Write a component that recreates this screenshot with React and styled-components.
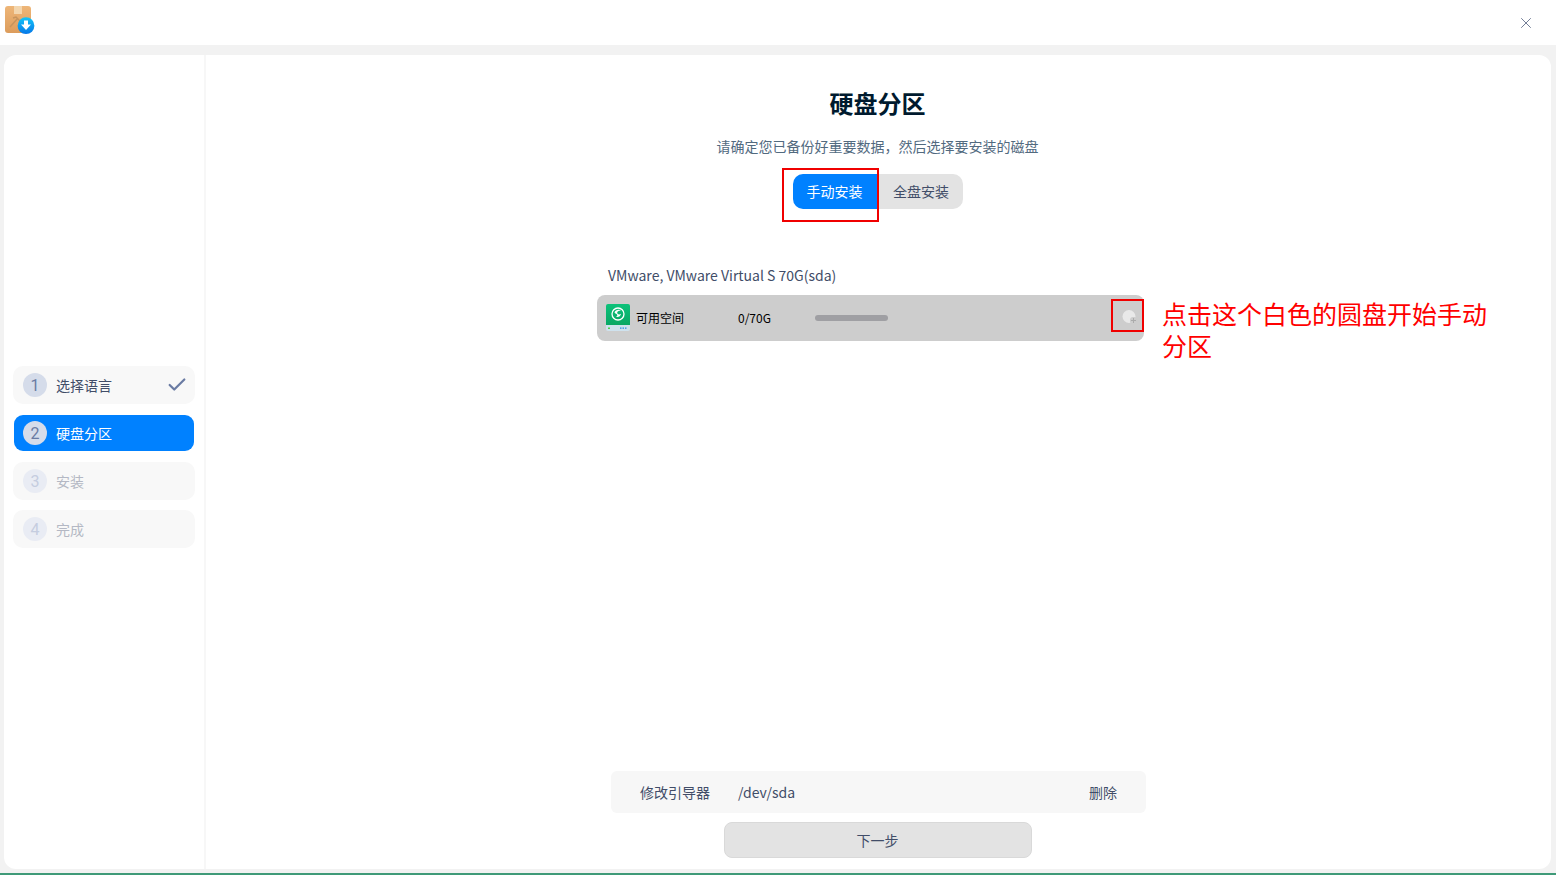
import React from 'react';
import styled, { createGlobalStyle } from 'styled-components';
import { X, Check } from 'lucide-react';

const cjk = `"Noto Sans CJK SC", "Noto Sans", sans-serif`;

const GlobalStyle = createGlobalStyle`
    html, body {
        margin: 0;
        padding: 0;
        height: 878px;
        overflow: hidden;
        background: #ffffff;
        font-family: ${cjk};
    }
    * {
        box-sizing: border-box;
    }
`;

const Page = styled.div`
    position: relative;
    width: 1556px;
    height: 878px;
    display: flex;
    flex-direction: column;
    background: #ffffff;
`;

const TitleBar = styled.header`
    height: 45px;
    flex-shrink: 0;
    display: flex;
    align-items: center;
    justify-content: space-between;
    padding: 0 21px 0 4px;
    background: #ffffff;
    color: #6f7a94;
`;

const LogoSlot = styled.span`
    align-self: flex-start;
    display: flex;
`;

const Desk = styled.div`
    height: 828px;
    flex-shrink: 0;
    display: flex;
    padding: 10px 5px 4px 4px;
    background: #f2f2f2;
`;

const GreenLine = styled.div`
    height: 2px;
    flex-shrink: 0;
    background: #3f9a78;
`;

const Panel = styled.div`
    flex: 1;
    display: flex;
    background: #ffffff;
    border-radius: 12px;
    overflow: hidden;
`;

const Sidebar = styled.nav`
    width: 202px;
    flex-shrink: 0;
    display: flex;
    flex-direction: column;
    gap: 10px;
    padding: 311px 9px 0 9px;
    border-right: 2px solid #f7f7f7;
`;

const StepRow = styled.div`
    height: 38px;
    display: flex;
    align-items: center;
    gap: 9px;
    padding: ${(p) => (p.$active ? '0 7px 1px 9px' : '0 7px 1px 10px')};
    border: ${(p) => (p.$active ? '1px solid transparent' : '0')};
    border-radius: 10px;
    background-clip: padding-box;
    background-color: ${(p) => (p.$active ? '#0081ff' : '#f8f8f8')};
    color: ${(p) => (p.$active ? '#ffffff' : p.$disabled ? '#b4b8c4' : '#414d68')};
    font-size: 14px;
`;

const StepNumber = styled.span`
    width: 24px;
    height: 24px;
    margin-top: 1px;
    flex-shrink: 0;
    display: flex;
    align-items: center;
    justify-content: center;
    border-radius: 50%;
    background: ${(p) => (p.$disabled ? '#e9ecf4' : '#d5dcea')};
    color: ${(p) => (p.$disabled ? '#c5cde0' : '#6a7ba3')};
    font-family: "Roboto", sans-serif;
    font-size: 16px;
`;

const StepLabel = styled.span`
    flex: 1;
`;

const StepCheck = styled(Check)`
    margin-top: 1px;
`;

const Main = styled.main`
    flex: 1;
    display: flex;
    flex-direction: column;
    align-items: center;
    padding-right: 2px;
`;

const Title = styled.h1`
    margin: 30px 0 0;
    font-size: 24px;
    line-height: 36px;
    font-weight: 700;
    color: #001a2e;
`;

const Subtitle = styled.p`
    margin: 14px 0 0;
    font-size: 14px;
    line-height: 22px;
    color: #526a7f;
`;

const ModeSwitch = styled.div`
    margin-top: 17px;
    display: flex;
    height: 35px;
    border-radius: 10px;
    overflow: hidden;
`;

const ModeButton = styled.div`
    width: ${(p) => (p.$active ? '86px' : '84px')};
    display: flex;
    align-items: center;
    justify-content: center;
    padding: ${(p) => (p.$active ? '0 2px 2px 0' : '0 0 2px 1px')};
    font-size: 14px;
    background: ${(p) => (p.$active ? '#0081ff' : '#e3e3e3')};
    color: ${(p) => (p.$active ? '#ffffff' : '#414d68')};
`;

const DiskSection = styled.section`
    align-self: flex-start;
    margin: 55px 0 0 391px;
    width: 547px;
`;

const DiskName = styled.div`
    padding-left: 11px;
    font-size: 14px;
    line-height: 22px;
    color: #414d68;
`;

const DiskRow = styled.div`
    margin-top: 9px;
    height: 46px;
    display: flex;
    align-items: center;
    padding: 0 6px 2px 9px;
    border-radius: 8px;
    background: #cdcdcd;
    font-size: 12px;
    color: #000000;
`;

const DiskLabel = styled.span`
    width: 102px;
    margin-left: 6px;
`;

const DiskSize = styled.span`
    width: 77px;
`;

const UsageBar = styled.span`
    width: 73px;
    height: 6px;
    margin-top: 2px;
    border-radius: 3px;
    background: #9f9fa3;
`;

const AddButton = styled.span`
    margin-left: auto;
    margin-top: 1px;
    width: 20px;
    height: 20px;
    display: flex;
    align-items: center;
    justify-content: center;
`;

const Spacer = styled.div`
    flex: 1;
`;

const BootRow = styled.div`
    width: 535px;
    height: 42px;
    margin-left: 2px;
    flex-shrink: 0;
    display: flex;
    align-items: center;
    padding: 0 29px;
    border-radius: 6px;
    background: #f7f7f7;
    font-size: 14px;
    color: #414d68;
`;

const BootLabel = styled.span`
    width: 98px;
`;

const BootPath = styled.span`
    flex: 1;
`;

const NextButton = styled.div`
    margin: 9px 0 11px;
    width: 308px;
    height: 36px;
    flex-shrink: 0;
    display: flex;
    align-items: center;
    justify-content: center;
    border: 1px solid #d9d9d9;
    border-radius: 8px;
    background: #e3e3e3;
    font-size: 14px;
    color: #414d68;
`;

const RedBox = styled.div`
    position: absolute;
    border: 2px solid #f00000;
    pointer-events: none;
    left: ${(p) => p.$x}px;
    top: ${(p) => p.$y}px;
    width: ${(p) => p.$w}px;
    height: ${(p) => p.$h}px;
`;

const Note = styled.div`
    position: absolute;
    left: 1162px;
    top: 297px;
    width: 335px;
    font-size: 25px;
    line-height: 32px;
    color: #ff0000;
`;

const AppLogo = () => (
    <svg width="31" height="35" viewBox="0 0 31 35">
        <defs>
            <linearGradient id="boxFill" x1="0" y1="0" x2="0" y2="1">
                <stop offset="0" stopColor="#eeb678" />
                <stop offset="1" stopColor="#dc9c5c" />
            </linearGradient>
            <linearGradient id="badgeFill" x1="0" y1="0" x2="0" y2="1">
                <stop offset="0" stopColor="#12c4f8" />
                <stop offset="1" stopColor="#0677e8" />
            </linearGradient>
        </defs>
        <rect x="1" y="6" width="26" height="27" rx="3" fill="url(#boxFill)" />
        <rect x="10" y="6" width="8" height="8" fill="#f3d6ae" />
        <path d="M6 27l8-9M9 18l3-1 7 7" stroke="#c6945e" strokeWidth="1.500" fill="none" />
        <circle cx="22" cy="25.700" r="8.400" fill="url(#badgeFill)" />
        <path d="M20 20.500h4v4h3l-5 5.500-5-5.500h3z" fill="#ffffff" />
    </svg>
);

const DiskIcon = () => (
    <svg width="24" height="27" viewBox="0 0 24 27">
        <defs>
            <linearGradient id="diskFill" x1="0" y1="0" x2="0" y2="1">
                <stop offset="0" stopColor="#0cc27a" />
                <stop offset="1" stopColor="#0aa765" />
            </linearGradient>
        </defs>
        <path d="M2 0h20a2 2 0 0 1 2 2v19H0V2a2 2 0 0 1 2-2z" fill="url(#diskFill)" />
        <path d="M0 21h24v4a2 2 0 0 1-2 2H2a2 2 0 0 1-2-2z" fill="#cfe2ee" />
        <rect x="2" y="23.500" width="2" height="1.500" fill="#4ed44e" />
        <path d="M14 24.200h1.500M16.500 24.200h1.500M19 24.200h1.500" stroke="#2b8fe8" strokeWidth="1.200" />
        <circle cx="12" cy="10" r="6" fill="none" stroke="#ffffff" strokeWidth="1.300" />
        <path d="M8.500 8.500c1-3 5-3.500 6.500-1.500-2-.8-4 .2-3.800 2 .2 1.500 2.200 1.900 3.800.8-.2 2.500-3 4-5.200 3 1.500-.3 2-1.600 1-2.600-.8-.8-2-.7-2.300-1.700z" fill="#ffffff" />
    </svg>
);

const AddDiskIcon = () => (
    <svg width="20" height="20" viewBox="0 0 20 20">
        <circle cx="11" cy="8.500" r="6.500" fill="#e9e9e9" />
        <rect x="12" y="9" width="7" height="7" rx="3" fill="#cdcdcd" />
        <path d="M15.500 10v5M13 12.500h5" stroke="#ababab" strokeWidth="1" />
    </svg>
);

const steps = [
    { n: 1, label: '选择语言', done: true },
    { n: 2, label: '硬盘分区', active: true },
    { n: 3, label: '安装', disabled: true },
    { n: 4, label: '完成', disabled: true },
];

export default function App() {
    return (
        <Page>
            <GlobalStyle />
            <TitleBar>
                <LogoSlot>
                    <AppLogo />
                </LogoSlot>
                <X size={18} strokeWidth={1.300} />
            </TitleBar>
            <Desk>
                <Panel>
                    <Sidebar>
                        {steps.map((step) => (
                            <StepRow key={step.n} $active={step.active} $disabled={step.disabled}>
                                <StepNumber $disabled={step.disabled}>{step.n}</StepNumber>
                                <StepLabel>{step.label}</StepLabel>
                                {step.done && <StepCheck size={22} color="#6a7ba3" strokeWidth={2.400} />}
                            </StepRow>
                        ))}
                    </Sidebar>
                    <Main>
                        <Title>硬盘分区</Title>
                        <Subtitle>请确定您已备份好重要数据，然后选择要安装的磁盘</Subtitle>
                        <ModeSwitch>
                            <ModeButton $active>手动安装</ModeButton>
                            <ModeButton>全盘安装</ModeButton>
                        </ModeSwitch>
                        <DiskSection>
                            <DiskName>VMware, VMware Virtual S 70G(sda)</DiskName>
                            <DiskRow>
                                <DiskIcon />
                                <DiskLabel>可用空间</DiskLabel>
                                <DiskSize>0/70G</DiskSize>
                                <UsageBar />
                                <AddButton>
                                    <AddDiskIcon />
                                </AddButton>
                            </DiskRow>
                        </DiskSection>
                        <Spacer />
                        <BootRow>
                            <BootLabel>修改引导器</BootLabel>
                            <BootPath>/dev/sda</BootPath>
                            <span>删除</span>
                        </BootRow>
                        <NextButton>下一步</NextButton>
                    </Main>
                </Panel>
            </Desk>
            <GreenLine />
            <RedBox $x={782} $y={168} $w={97} $h={54} />
            <RedBox $x={1111} $y={299} $w={33} $h={33} />
            <Note>点击这个白色的圆盘开始手动分区</Note>
        </Page>
    );
}
